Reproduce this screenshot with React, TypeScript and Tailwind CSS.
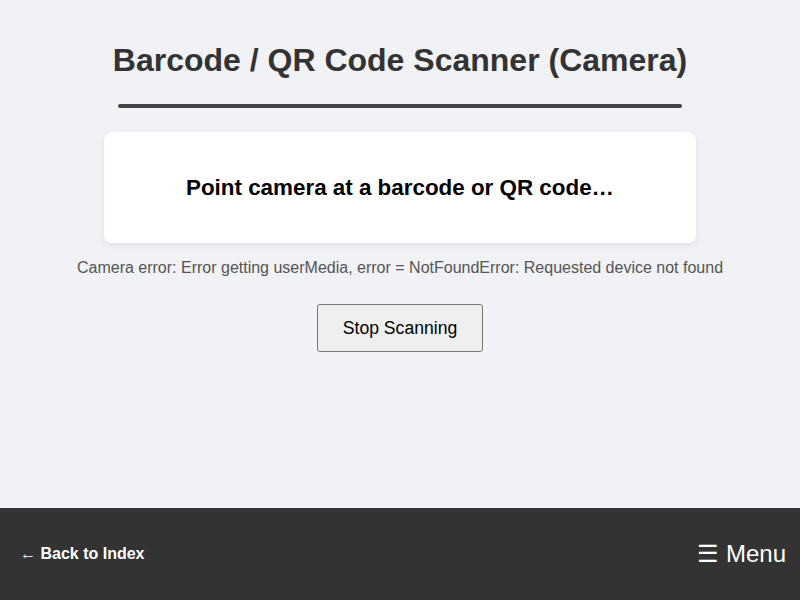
export default function App() {
  return (
    <div
      className="flex min-h-[600px] w-full flex-col bg-[#f0f2f5]"
      style={{ fontFamily: '"Liberation Sans", Arial, sans-serif' }}
    >
      <main className="flex h-[508px] flex-col items-center">
        <h1 className="mt-[42px] text-[32px] font-bold leading-[36px] text-[#333333]">
          Barcode / QR Code Scanner (Camera)
        </h1>
        <div className="mt-[26px] h-[4px] w-[564px] rounded-full bg-[#444444]" />
        <div className="mt-[24px] flex h-[111px] w-[592px] items-center justify-center rounded-lg bg-white shadow-[0_2px_6px_rgba(0,0,0,0.08)]">
          <p className="text-[22.4px] font-bold leading-[26px] text-black">
            Point camera at a barcode or QR code…
          </p>
        </div>
        <p className="mt-[16px] text-[16px] leading-[18px] text-[#555555]">
          Camera error: Error getting userMedia, error = NotFoundError: Requested device not found
        </p>
        <button className="mt-[27px] h-[48px] w-[166px] rounded-[3px] border border-[#767676] bg-[#efefef] text-[17.6px] text-black">
          Stop Scanning
        </button>
      </main>
      <footer className="flex h-[92px] items-center justify-between bg-[#333333] pl-[20px] pr-[14px] text-white">
        <a className="text-[16px] font-bold leading-[18px]">← Back to Index</a>
        <span className="text-[24px] leading-[28px]">☰ Menu</span>
      </footer>
    </div>
  );
}
